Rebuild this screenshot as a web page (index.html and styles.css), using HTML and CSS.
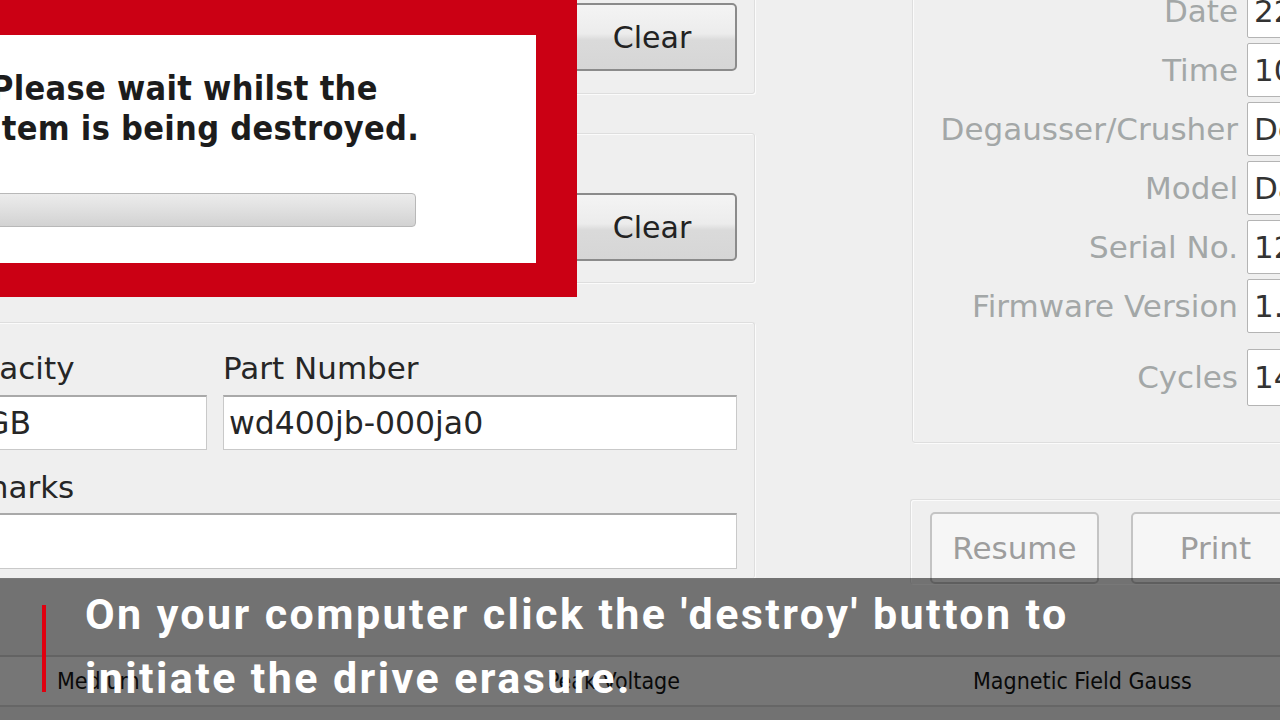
FILE: index.html
```html
<!DOCTYPE html>
<html>
<head>
<meta charset="utf-8">
<title>Destroy</title>
<link rel="stylesheet" href="styles.css">
</head>
<body>
<div class="screen">
  <div class="workspace">
    <div class="left">
      <div class="group g1">
        <button class="btn">Clear</button>
      </div>
      <div class="group g2">
        <button class="btn">Clear</button>
      </div>
      <div class="group g3">
        <div class="field-row">
          <div class="field cap">
            <div class="label">Capacity</div>
            <div class="input">40GB</div>
          </div>
          <div class="field part">
            <div class="label">Part Number</div>
            <div class="input">wd400jb-000ja0</div>
          </div>
        </div>
        <div class="field remarks">
          <div class="label">Remarks</div>
          <div class="input tall"></div>
        </div>
      </div>
    </div>
    <div class="right">
      <div class="group info">
        <div class="lbl">Date</div><div class="val">22/07/2014</div>
        <div class="lbl">Time</div><div class="val">10:42</div>
        <div class="lbl">Degausser/Crusher</div><div class="val">Degausser</div>
        <div class="lbl">Model</div><div class="val">DataGauss</div>
        <div class="lbl">Serial No.</div><div class="val">12345</div>
        <div class="lbl">Firmware Version</div><div class="val">1.0</div>
        <div class="lbl cyc">Cycles</div><div class="val cyc">1423</div>
      </div>
      <div class="group actions">
        <button class="btn dis">Resume</button>
        <button class="btn dis">Print</button>
      </div>
    </div>
  </div>
  <div class="table-head">
    <div class="th c1">Medium</div>
    <div class="th c2">Peak Voltage</div>
    <div class="th c3">Magnetic Field Gauss</div>
  </div>

  <div class="modal">
    <p class="msg">Please wait whilst the<br>item is being destroyed.</p>
    <div class="progress"></div>
  </div>

  <div class="caption">
    <div class="caption-bar"></div>
    <div class="caption-text">On your computer click the 'destroy' button to<br>initiate the drive erasure.</div>
  </div>
</div>
</body>
</html>
```

FILE: styles.css
```css
* { box-sizing: border-box; }
html, body { margin: 0; padding: 0; }
body {
  width: 1280px;
  height: 720px;
  overflow: hidden;
  background: #efefef;
  font-family: "DejaVu Sans", sans-serif;
  color: #2a2a2a;
}
.screen {
  position: relative;
  width: 1280px;
  height: 720px;
  overflow: hidden;
}
.workspace {
  display: flex;
  height: 578px;
}
.left {
  width: 835px;
  margin-left: -80px;
  display: flex;
  flex-direction: column;
  flex-shrink: 0;
}
.group {
  border: 1px solid #dedede;
  border-radius: 3px;
  box-shadow: inset 1px 1px 0 #fbfbfb, 1px 1px 0 #fbfbfb;
}
.g1 {
  margin-top: -40px;
  height: 134px;
  display: flex;
  justify-content: flex-end;
  align-items: flex-end;
  padding: 0 17px 22px 0;
  flex-shrink: 0;
}
.g2 {
  margin-top: 39px;
  height: 150px;
  display: flex;
  justify-content: flex-end;
  align-items: flex-end;
  padding: 0 17px 21px 0;
  flex-shrink: 0;
}
.g3 {
  margin-top: 39px;
  flex: 1;
  padding: 26px 17px 0 18px;
  border-bottom: none;
}
.btn {
  width: 170px;
  height: 68px;
  border: 2px solid #8b8b8b;
  border-radius: 5px;
  background: linear-gradient(#f4f4f4 0%, #ececec 45%, #dadada 55%, #d6d6d6 100%);
  font-family: "DejaVu Sans", sans-serif;
  font-size: 30px;
  color: #222;
  padding: 0;
}
.field-row {
  display: flex;
  gap: 16px;
}
.cap { width: 268px; }
.part { flex: 1; }
.label {
  font-size: 31px;
  line-height: 38px;
  height: 38px;
  color: #262626;
  white-space: nowrap;
}
.input {
  margin-top: 8px;
  height: 55px;
  background: #fff;
  border: 1px solid #c9c9c9;
  border-top: 2px solid #a9a9a9;
  font-size: 31.5px;
  line-height: 52px;
  padding-left: 5px;
  color: #262626;
  white-space: nowrap;
}
.remarks { margin-top: 18px; }
.remarks .input { margin-top: 7px; height: 56px; }

.right {
  margin-left: 155px;
  width: 420px;
  flex-shrink: 0;
  display: flex;
  flex-direction: column;
}
.info {
  flex-shrink: 0;
  margin-top: -20px;
  margin-left: 2px;
  height: 463px;
  padding-top: 3px;
  display: grid;
  grid-template-columns: 325px 1fr;
  grid-auto-rows: 54px;
  column-gap: 9px;
  row-gap: 5px;
  align-content: start;
}
.lbl {
  font-size: 31px;
  color: #a3a7a7;
  text-align: right;
  line-height: 54px;
  white-space: nowrap;
}
.val {
  background: #fff;
  border: 1px solid #b4b4b4;
  border-radius: 2px;
  font-size: 31px;
  line-height: 52px;
  padding-left: 6px;
  color: #333;
  white-space: nowrap;
  overflow: hidden;
}
.lbl.cyc, .val.cyc { margin-top: 11px; height: 57px; line-height: 57px; }
.val.cyc { line-height: 55px; }
.actions {
  margin-top: 56px;
  flex: 1;
  padding: 12px 0 0 19px;
  display: flex;
  gap: 32px;
  align-items: flex-start;
  border-bottom: none;
  border-right: none;
}
.btn.dis {
  width: 169px;
  height: 72px;
  flex-shrink: 0;
  background: #f6f6f6;
  border: 2px solid #c4c4c4;
  color: #9d9d9d;
  font-size: 31px;
}

.table-head {
  margin-top: 77px;
  height: 52px;
  border-top: 2px solid #cfcfcf;
  border-bottom: 2px solid #d6d6d6;
  background: #f6f6f6;
  display: grid;
  grid-template-columns: 400px 380px 500px;
  align-items: center;
}
.th {
  font-family: "DejaVu Sans Condensed", "DejaVu Sans", sans-serif;
  font-size: 23px;
  color: #141414;
  white-space: nowrap;
}
.c1 { padding-left: 57px; }
.c2 { text-align: right; padding-right: 100px; }
.c3 { padding-left: 193px; }

.modal {
  position: absolute;
  left: -60px;
  top: 0;
  width: 637px;
  height: 297px;
  background: #fff;
  border-style: solid;
  border-color: #cb0014;
  border-width: 35px 41px 34px 35px;
  padding: 33px 0 0 16px;
}
.msg {
  margin: 0;
  font-family: "DejaVu Sans Condensed", "DejaVu Sans", sans-serif;
  font-weight: bold;
  font-size: 34px;
  line-height: 40px;
  letter-spacing: 0.3px;
  color: #1c1c1c;
  white-space: nowrap;
}
.progress {
  margin-top: 45px;
  width: 425px;
  height: 34px;
  border: 1px solid #b8b8b8;
  border-radius: 4px;
  background: linear-gradient(#ececec 0%, #e2e2e2 40%, #d2d2d2 100%);
}

.caption {
  position: absolute;
  left: 0;
  top: 578px;
  width: 1280px;
  height: 142px;
  background: rgba(0, 0, 0, 0.52);
  display: flex;
  align-items: flex-start;
  padding-left: 42px;
}
.caption-bar {
  width: 4px;
  height: 87px;
  margin-top: 27px;
  background: #e0000f;
}
.caption-text {
  margin-left: 39px;
  padding-top: 4px;
  font-family: Roboto, "Noto Sans", sans-serif;
  font-weight: 700;
  font-size: 43px;
  letter-spacing: 2.4px;
  line-height: 64px;
  color: #fff;
  white-space: nowrap;
}
```
